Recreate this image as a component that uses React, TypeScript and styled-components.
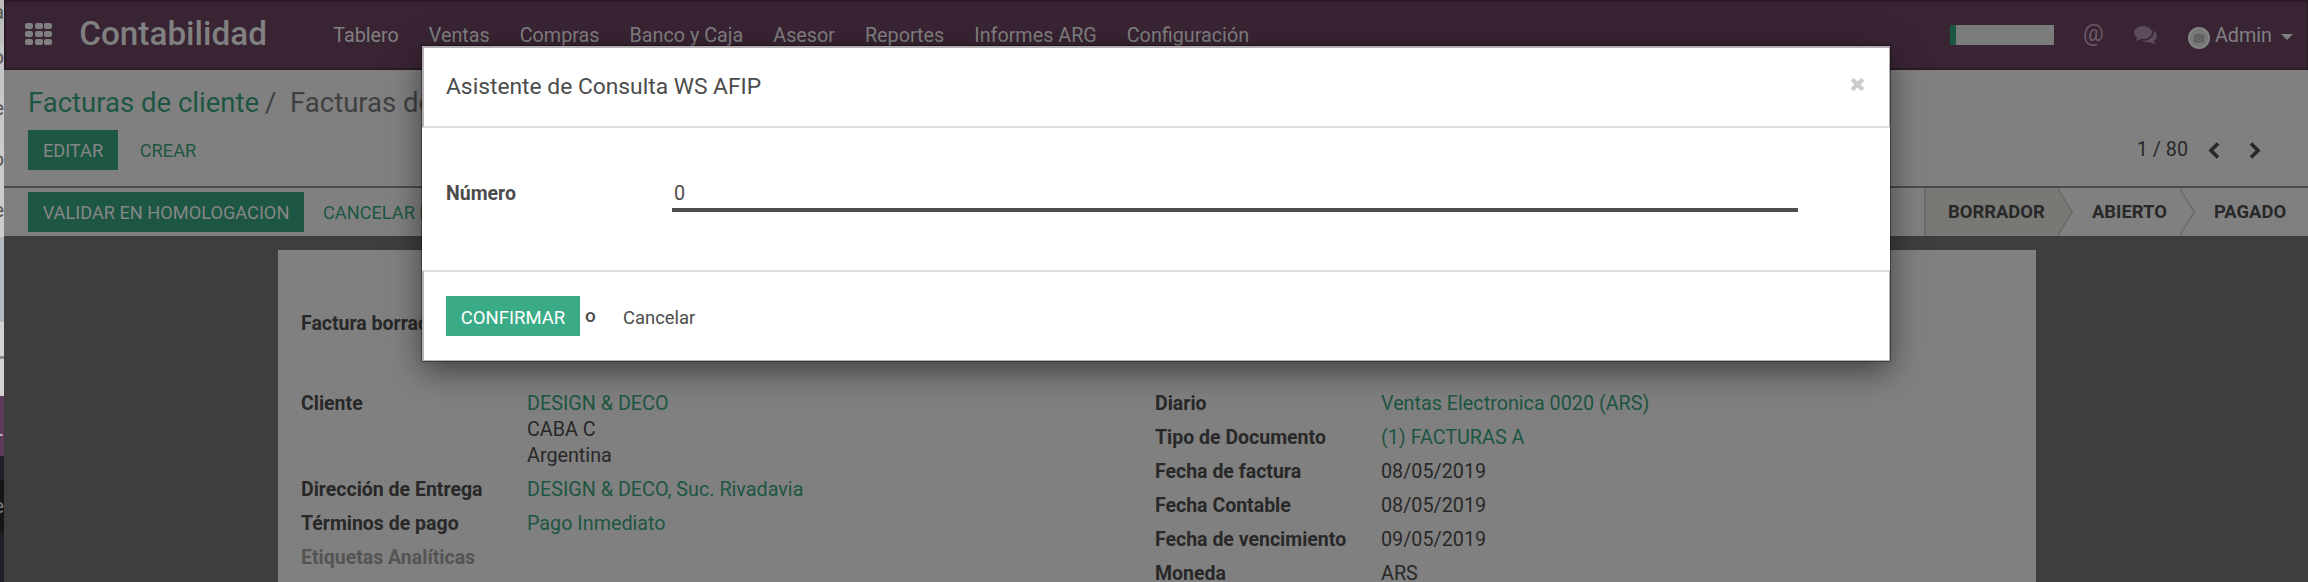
import React from "react";
import styled, { createGlobalStyle } from "styled-components";
import { FaCamera } from "react-icons/fa";

const GlobalStyle = createGlobalStyle`
  * { box-sizing: border-box; }
  body { margin: 0; overflow: hidden; background: #3e3e3e; }
`;

const c = {
  nav: "#392434",
  navEdge: "#2b1b27",
  navText: "#808080",
  page: "#808080",
  desk: "#3e3e3e",
  green: "#1d5642",
  text: "#282828",
  muted: "#545454",
};

const Screen = styled.div`
  position: relative;
  display: flex;
  width: 2308px;
  height: 582px;
  overflow: hidden;
  font-family: Roboto, "Liberation Sans", sans-serif;
  font-size: 19.75px;
  line-height: 26px;
  color: ${c.text};
  white-space: nowrap;
`;

const Strip = styled.div`
  display: flex;
  flex-direction: column;
  flex: none;
  width: 4px;
  overflow: hidden;
`;

const StripPart = styled.div<{ h: number; bg: string; fg?: string; pt?: number }>`
  flex: none;
  height: ${(p) => p.h}px;
  padding-top: ${(p) => p.pt || 0}px;
  background: ${(p) => p.bg};
  color: ${(p) => p.fg || "#555"};
  direction: rtl;
  overflow: hidden;
`;

const Window = styled.div`
  flex: 1;
  min-width: 0;
  display: flex;
  flex-direction: column;
  background: ${c.page};
`;

const Navbar = styled.header`
  display: flex;
  flex: none;
  align-items: center;
  height: 70px;
  padding: 0 14px 2px 19px;
  background: ${c.nav};
  border: 2px solid ${c.navEdge};
  border-right-width: 1px;
  color: ${c.navText};
`;

const AppsGrid = styled.div`
  display: grid;
  grid-template-columns: repeat(3, 8px);
  grid-auto-rows: 6px;
  gap: 1.6px;
  margin-right: 27px;
  i { background: ${c.navText}; border-radius: 2px; }
`;

const Brand = styled.div`
  width: 254px;
  font-size: 33.3px;
  font-weight: 500;
  line-height: 40px;
`;

const Menu = styled.nav`
  display: flex;
  gap: 30px;
  flex: 1;
  padding-top: 3px;
`;

const Systray = styled.div`
  display: flex;
  align-items: center;
`;

const Progress = styled.div`
  width: 104px;
  height: 20px;
  margin: 2px 29px 0 0;
  background: #7b7b7b;
  border-left: 6px solid ${c.green};
`;

const At = styled.span`
  width: 51px;
  font-size: 23px;
  color: #6b5a68;
`;

const Comments = styled.svg`
  width: 23px;
  height: 18px;
  margin: 2px 31px 0 0;
  fill: #5d4c59;
`;

const Avatar = styled.span`
  display: flex;
  align-items: center;
  justify-content: center;
  width: 22px;
  height: 22px;
  margin: 8px 5px 0 0;
  border-radius: 50%;
  border: 2px solid #858585;
  background: #777;
  color: #5e5e5e;
  svg { display: block; width: 10px; height: 10px; }
`;

const UserName = styled.span`
  padding-top: 3px;
`;

const Caret = styled.span`
  margin: 6px 0 0 9px;
  border: 6px solid transparent;
  border-top-color: ${c.navText};
  border-bottom: 0;
`;

const ControlPanel = styled.section`
  display: flex;
  flex: none;
  flex-direction: column;
  height: 118px;
  padding: 15px 47px 0 24px;
  border-bottom: 2px solid #4a4a4a;
`;

const Breadcrumb = styled.div`
  display: flex;
  font-size: 27.5px;
  line-height: 36px;
  height: 45px;
  padding-top: 0;
  color: #404040;
`;

const Crumb = styled.span<{ link?: boolean }>`
  color: ${(p) => (p.link ? c.green : "inherit")};
  margin-right: ${(p) => (p.link ? 6 : 0)}px;
`;

const Slash = styled.span`
  width: 25px;
`;

const Bar = styled.div`
  display: flex;
  align-items: center;
`;

const Spacer = styled.div`
  flex: 1;
`;

const Button = styled.button<{ w: number; kind?: "link" | "bright" }>`
  width: ${(p) => p.w}px;
  flex: none;
  height: 40px;
  padding: 2px 0 0;
  border: 0;
  font: inherit;
  font-size: ${(p) => (p.kind === "bright" ? 18.5 : 18.2)}px;
  text-align: center;
  background: ${(p) => (p.kind === "link" ? "none" : p.kind === "bright" ? "#3aab86" : c.green)};
  color: ${(p) => (p.kind === "link" ? c.green : p.kind === "bright" ? "#fff" : "#868686")};
`;

const ActionLink = styled(Button)`
  text-align: left;
  padding-left: 19px;
`;

const Pager = styled.span`
  margin-top: -1px;
`;

const Chevron = styled.svg`
  width: 12px;
  height: 17px;
  margin-left: 20px;
  & + & { margin-left: 29px; }
  fill: none;
  stroke: ${c.text};
  stroke-width: 3.6;
`;

const StatusBar = styled.section`
  display: flex;
  flex: none;
  align-items: center;
  height: 48px;
  padding-left: 24px;
`;

const Stage = styled.div<{ w: number; pl: number; active?: boolean }>`
  display: flex;
  align-items: center;
  flex: none;
  width: ${(p) => p.w}px;
  height: 48px;
  padding-left: ${(p) => p.pl}px;
  font-size: 18.4px;
  font-weight: 700;
  background: ${(p) => (p.active ? "#787875" : "none")};
  border-left: ${(p) => (p.active ? "2px solid #6b6b69" : "0")};
`;

const Arrow = styled.svg`
  width: 15px;
  height: 48px;
  flex: none;
`;

const Desk = styled.main`
  flex: 1;
  min-height: 0;
  padding: 14px 272px 0 274px;
  background: ${c.desk};
`;

const Sheet = styled.div`
  height: 332px;
  padding: 61px 23px 0;
  background: ${c.page};
`;

const Columns = styled.div`
  display: grid;
  grid-template-columns: 854px 1fr;
  margin-top: 54px;
`;

const Group = styled.dl<{ label: number }>`
  display: grid;
  grid-template-columns: ${(p) => p.label}px 1fr;
  align-content: start;
  row-gap: 8px;
  margin: 0;
`;

const Label = styled.dt<{ muted?: boolean }>`
  font-size: 19.5px;
  font-weight: 700;
  color: ${(p) => (p.muted ? c.muted : "inherit")};
`;

const Value = styled.dd<{ link?: boolean }>`
  margin: 0;
  color: ${(p) => (p.link ? c.green : "inherit")};
`;

const Link = styled.span`
  color: ${c.green};
`;

const Dialog = styled.div`
  position: absolute;
  left: 422px;
  top: 46px;
  width: 1468px;
  height: 315px;
  background: #fff;
  color: #4c4c4c;
  box-shadow: 0 0 0 1px rgba(0, 0, 0, 0.35), 0 10px 30px rgba(0, 0, 0, 0.5);
`;

const DialogHeader = styled.div`
  display: flex;
  justify-content: space-between;
  height: 82px;
  padding: 26px 24px 0 22px;
  border: solid #b5b0b4;
  border-width: 2px 1px 0 2px;
  border-bottom: 2px solid #ddd;
  font-size: 22.8px;
`;

const Close = styled.svg`
  width: 15px;
  height: 15px;
  margin-top: 3px;
  stroke: #ccc;
  stroke-width: 4;
`;

const DialogBody = styled.div`
  display: flex;
  height: 142px;
  padding: 52px 92px 0 24px;
`;

const FieldLabel = styled.div`
  width: 226px;
  padding-top: 1px;
  font-size: 19.5px;
  font-weight: 700;
`;

const Field = styled.div`
  flex: 1;
  height: 32px;
  padding: 1px 2px 0;
  border-bottom: 4px solid #4f4f4f;
`;

const DialogFooter = styled.div`
  display: flex;
  height: 91px;
  padding: 24px 22px 0;
  border: solid #b5b5b5;
  border-width: 0 1px 1px 2px;
  border-top: 2px solid #ddd;
`;

const ConfirmButton = styled(Button)`
  padding-top: 3px;
`;

const Or = styled.span`
  width: 43px;
  padding: 7px 0 0 5px;
  font-size: 19px;
  font-weight: 500;
`;

const Cancel = styled.span`
  padding-top: 9px;
  font-size: 18.4px;
`;

const menu = ["Tablero", "Ventas", "Compras", "Banco y Caja", "Asesor", "Reportes", "Informes ARG", "Configuración"];

const dates: [string, string, boolean?][] = [
  ["Diario", "Ventas Electronica 0020 (ARS)", true],
  ["Tipo de Documento", "(1) FACTURAS A", true],
  ["Fecha de factura", "08/05/2019"],
  ["Fecha Contable", "08/05/2019"],
  ["Fecha de vencimiento", "09/05/2019"],
  ["Moneda", "ARS"],
];

const StageArrow = ({ filled }: { filled?: boolean }) => (
  <Arrow viewBox="0 0 15 48">
    {filled && <path d="M0 0V3L14 24L0 45V48Z" fill="#787875" />}
    <path d="M1 0V3L14.3 24L1 45V48" fill="none" stroke="#6b6b69" strokeWidth="1.6" />
  </Arrow>
);

export default function App() {
  return (
    <Screen>
      <GlobalStyle />
      <Strip>
        <StripPart h={42} bg="#bdbdbd">a</StripPart>
        <StripPart h={52} bg="#c4c4c4" pt={3}>o</StripPart>
        <StripPart h={53} bg="#c9c9c9" pt={2}>e</StripPart>
        <StripPart h={51} bg="#cccccc">o</StripPart>
        <StripPart h={39} bg="#cccccc">e</StripPart>
        <StripPart h={85} bg="#b3b8bf" />
        <StripPart h={34} bg="#d2d2d2" />
        <StripPart h={3} bg="#8a8a8a" />
        <StripPart h={37} bg="#d2d2d2" />
        <StripPart h={60} bg="#5f3b5a" fg="#ccc" pt={21}>.</StripPart>
        <StripPart h={24} bg="#1e1f27" />
        <StripPart h={52} bg="#151515" fg="#777" pt={14}>e</StripPart>
        <StripPart h={50} bg="#1e1f27" />
      </Strip>
      <Window>
        <Navbar>
          <AppsGrid>
            {Array.from({ length: 9 }, (_, i) => <i key={i} />)}
          </AppsGrid>
          <Brand>Contabilidad</Brand>
          <Menu>
            {menu.map((m) => <span key={m}>{m}</span>)}
          </Menu>
          <Systray>
            <Progress />
            <At>@</At>
            <Comments viewBox="0 256 1792 1408">
              <path d="M1408 768q0 139-94 257t-256.5 186.5T704 1280q-86 0-176-16-124 88-278 128-36 9-86 16h-3q-11 0-20.5-8t-11.5-21q-1-3-1-6.5t.5-6.5 2-6l2.5-5 3.5-5.5 4-5 4.5-5 4-4.5q5-6 23-25t26-29.5 22.5-29 25-38.5 20.5-44q-124-72-195-177T0 768q0-139 94-257t256.5-186.5T704 256t353.5 68.5T1314 511t94 257zm384 256q0 120-71 224.5T1526 1425q10 24 20.5 44t25 38.5 22.5 29 26 29.5 23 25q1 1 4 4.5t4.5 5 4 5 3.5 5.5l2.5 5 2 6 .5 6.5-1 6.5q-3 14-13 22t-22 7q-50-7-86-16-154-40-278-128-90 16-176 16-271 0-472-132 58 4 88 4 161 0 309-45t264-129q125-92 192-212t67-254q0-77-23-152 129 71 204 178t75 230z" />
            </Comments>
            <Avatar><FaCamera /></Avatar>
            <UserName>Admin</UserName>
            <Caret />
          </Systray>
        </Navbar>
        <ControlPanel>
          <Breadcrumb>
            <Crumb link>Facturas de cliente</Crumb>
            <Slash>/</Slash>
            <Crumb>Facturas de</Crumb>
          </Breadcrumb>
          <Bar>
            <Button w={90}>EDITAR</Button>
            <Button w={100} kind="link">CREAR</Button>
            <Spacer />
            <Pager>1 / 80</Pager>
            <Chevron viewBox="0 0 12 17"><path d="M10 1.5L3 8.5L10 15.5" /></Chevron>
            <Chevron viewBox="0 0 12 17"><path d="M2 1.5L9 8.5L2 15.5" /></Chevron>
          </Bar>
        </ControlPanel>
        <StatusBar>
          <Button w={276}>VALIDAR EN HOMOLOGACION</Button>
          <ActionLink w={218} kind="link">CANCELAR F</ActionLink>
          <Spacer />
          <Stage w={134} pl={22} active>BORRADOR</Stage>
          <StageArrow filled />
          <Stage w={107} pl={19}>ABIERTO</Stage>
          <StageArrow />
          <Stage w={113} pl={19}>PAGADO</Stage>
        </StatusBar>
        <Desk>
          <Sheet>
            <Label as="div">Factura borrador</Label>
            <Columns>
              <Group label={226}>
                <Label>Cliente</Label>
                <Value><Link>DESIGN &amp; DECO</Link><br />CABA C<br />Argentina</Value>
                <Label>Dirección de Entrega</Label>
                <Value link>DESIGN &amp; DECO, Suc. Rivadavia</Value>
                <Label>Términos de pago</Label>
                <Value link>Pago Inmediato</Value>
                <Label muted>Etiquetas Analíticas</Label>
              </Group>
              <Group label={226}>
                {dates.map(([l, v, link]) => (
                  <React.Fragment key={l}>
                    <Label>{l}</Label>
                    <Value link={link}>{v}</Value>
                  </React.Fragment>
                ))}
              </Group>
            </Columns>
          </Sheet>
        </Desk>
      </Window>
      <Dialog>
        <DialogHeader>
          <span>Asistente de Consulta WS AFIP</span>
          <Close viewBox="0 0 14 14"><path d="M2 2L12 12M12 2L2 12" /></Close>
        </DialogHeader>
        <DialogBody>
          <FieldLabel>Número</FieldLabel>
          <Field>0</Field>
        </DialogBody>
        <DialogFooter>
          <ConfirmButton w={134} kind="bright">CONFIRMAR</ConfirmButton>
          <Or>o</Or>
          <Cancel>Cancelar</Cancel>
        </DialogFooter>
      </Dialog>
    </Screen>
  );
}
